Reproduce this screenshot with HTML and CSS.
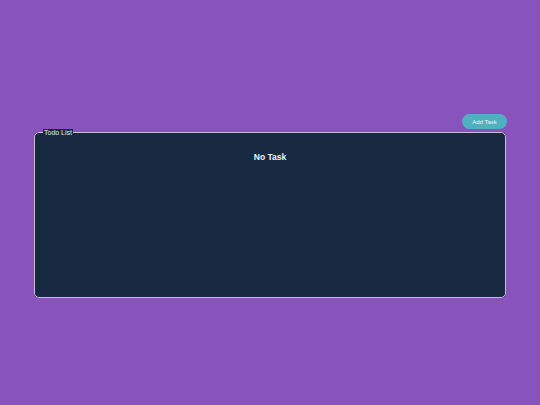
FILE: index.html
```html
<!DOCTYPE html>
<html>
<head>
<meta charset="utf-8">
<link rel="stylesheet" href="styles.css">
</head>
<body>
<div class="app">
  <div class="toolbar">
    <button class="add-btn">Add Task</button>
  </div>
  <fieldset class="todo">
    <legend class="todo-title">Todo List</legend>
    <p class="empty">No Task</p>
  </fieldset>
</div>
</body>
</html>
```
FILE: styles.css
```css
html, body {
  margin: 0;
  padding: 0;
}
body {
  background: #8953bd;
  font-family: "Liberation Sans", Arial, sans-serif;
  height: 405px;
}
.app {
  width: 472px;
  margin: 0 auto;
  padding-top: 114px;
}
.toolbar {
  display: flex;
  justify-content: flex-end;
  margin-right: -1px;
}
.add-btn {
  border: none;
  background: #4fb1c0;
  color: #e8f4f8;
  font-family: "Liberation Sans", Arial, sans-serif;
  font-size: 6px;
  height: 15px;
  width: 45px;
  border-radius: 8px;
  padding: 0;
}
.todo {
  margin: 0;
  padding: 0;
  height: 169px;
  box-sizing: border-box;
  border: 1px solid #c7bdd8;
  border-radius: 5px;
  background: #172a42;
}
.todo-title {
  margin-left: 8px;
  padding: 0 1px;
  background: #172a42;
  color: #e0eef4;
  font-size: 7px;
  line-height: 7px;
}
.empty {
  margin: 15.5px 0 0 0;
  text-align: center;
  color: #f2f5f8;
  font-weight: bold;
  font-size: 8.5px;
}
```
